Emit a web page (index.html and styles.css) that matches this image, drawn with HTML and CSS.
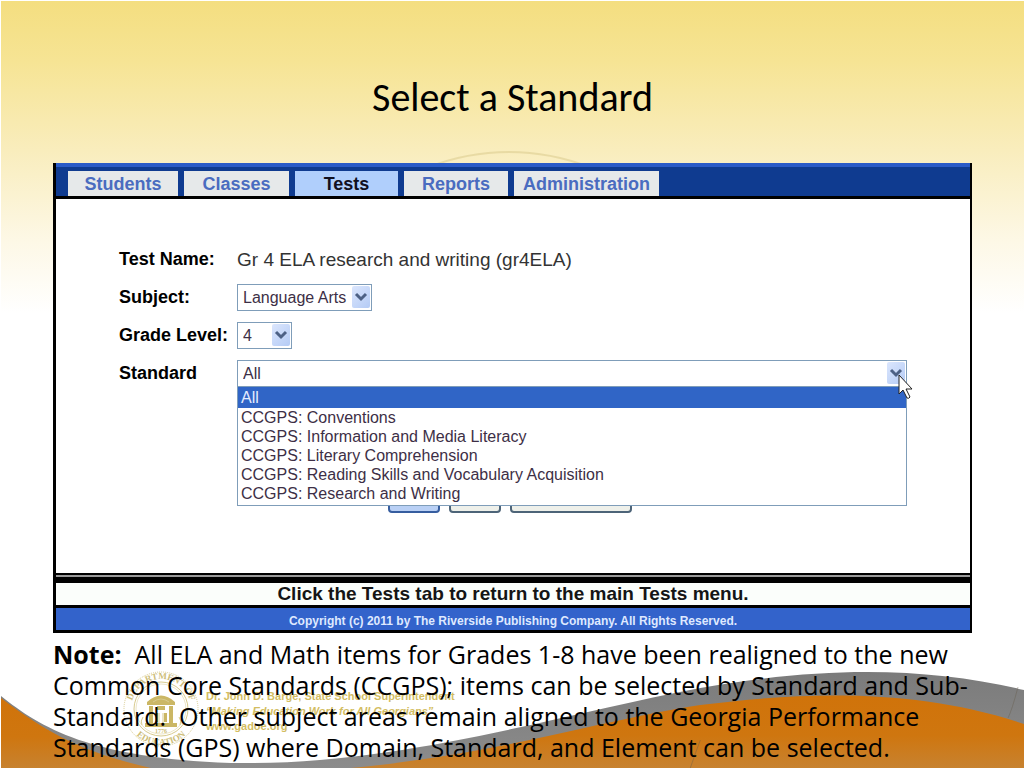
FILE: index.html
```
<!DOCTYPE html>
<html lang="en">
<head>
    <meta charset="UTF-8">
    <meta name="viewport" content="width=device-width, initial-scale=1.0">
    <title>Select a Standard</title>
    <link rel="stylesheet" href="styles.css">
</head>
<body>
    <div class="slide">
        <!-- Slide master decoration -->
        <svg class="watermark" viewBox="0 0 444 444" aria-hidden="true">
            <circle cx="222" cy="222" r="220" />
            <circle cx="222" cy="222" r="205" stroke-dasharray="8 20" />
        </svg>
        <svg class="waves" viewBox="0 0 1024 108" preserveAspectRatio="none" aria-hidden="true">
            <defs>
                <linearGradient id="gray" x1="0" y1="0" x2="0" y2="1">
                    <stop offset="0" stop-color="#7b7b7b" />
                    <stop offset="1" stop-color="#8c8c8c" />
                </linearGradient>
                <linearGradient id="orange" x1="0" y1="0" x2="0" y2="1">
                    <stop offset="0" stop-color="#d0730a" />
                    <stop offset="0.55" stop-color="#cf760f" />
                    <stop offset="1" stop-color="#c78230" />
                </linearGradient>
            </defs>
            <path fill="url(#gray)" d="M0 36C40 68 90 98 230 103C400 106 560 54 700 28C830 5 930 8 1024 30V108H0Z" />
            <path fill="url(#orange)" d="M0 38C45 72 80 92 150 108H0Z" />
            <path fill="url(#orange)" d="M350 108C500 94 600 60 700 45C810 31 920 29 1024 64V108Z" />
            <path class="crease" d="M1018 27Q1012 50 1008 58M700 80Q694 96 690 108" />
        </svg>
        <div class="sponsor">
            <svg class="seal" viewBox="0 0 76 76" aria-hidden="true">
                <defs>
                    <path id="ring-top" d="M8 38a30 30 0 0 1 60 0" />
                    <path id="ring-bottom" d="M2 38a36 36 0 0 0 72 0" />
                </defs>
                <circle cx="38" cy="38" r="37" stroke-dasharray="1 1" />
                <circle cx="38" cy="38" r="27" />
                <circle cx="38" cy="38" r="25" stroke-width="0.5" />
                <text><textPath href="#ring-top" startOffset="50%">DEPARTMENT OF</textPath></text>
                <text><textPath href="#ring-bottom" startOffset="50%">EDUCATION</textPath></text>
                <path class="arch" d="M24 31q14-13 28 0v3H24zM26 35h4v17h-4zM46 35h4v17h-4zM34 35h8v4h-8zM22 52h32v4H22zM32 42h3v9h-3zM41 42h3v9h-3z" />
                <path d="M30 31q8-6 16 0M36 42v10M40 42v10M20 46q-3 4-1 8M56 46q3 4 1 8" />
                <text class="year" x="38" y="62">1776</text>
            </svg>
            <div class="sponsor-text">
                Dr. John D. Barge, State School Superintendent<br>
                <em>“Making Education Work for All Georgians”</em><br>
                www.gadoe.org
            </div>
        </div>

        <h1>Select a Standard</h1>

        <main class="panel">
            <nav class="tabs">
                <a href="#">Students</a>
                <a href="#">Classes</a>
                <a href="#" class="active">Tests</a>
                <a href="#">Reports</a>
                <a href="#">Administration</a>
            </nav>

            <form class="form">
                <div class="form-row">
                    <span class="label">Test Name:</span>
                    <span class="test-name">Gr 4 ELA research and writing (gr4ELA)</span>
                </div>
                <div class="form-row">
                    <label class="label" for="subject">Subject:</label>
                    <div class="select select-subject">
                        <select id="subject">
                            <option>Language Arts</option>
                        </select>
                        <svg class="arrow" viewBox="0 0 18 22" aria-hidden="true"><path d="M4 8l5 5 5-5" /></svg>
                    </div>
                </div>
                <div class="form-row">
                    <label class="label" for="grade">Grade Level:</label>
                    <div class="select select-grade">
                        <select id="grade">
                            <option>4</option>
                        </select>
                        <svg class="arrow" viewBox="0 0 18 22" aria-hidden="true"><path d="M4 8l5 5 5-5" /></svg>
                    </div>
                </div>
                <div class="form-row">
                    <label class="label" for="standard">Standard</label>
                    <div class="select select-standard">
                        <select id="standard">
                            <option>All</option>
                        </select>
                        <svg class="arrow" viewBox="0 0 18 22" aria-hidden="true"><path d="M4 8l5 5 5-5" /></svg>
                        <ul class="options" role="listbox" aria-label="Standard">
                            <li role="option" aria-selected="true" class="selected">All</li>
                            <li role="option">CCGPS: Conventions</li>
                            <li role="option">CCGPS: Information and Media Literacy</li>
                            <li role="option">CCGPS: Literary Comprehension</li>
                            <li role="option">CCGPS: Reading Skills and Vocabulary Acquisition</li>
                            <li role="option">CCGPS: Research and Writing</li>
                        </ul>
                        <svg class="cursor" viewBox="0 0 16 26" aria-hidden="true">
                            <path d="M1 1v19l4-4 4 8q2 1 3-1l-4-8h6z" />
                        </svg>
                    </div>
                </div>
                <div class="buttons">
                    <button type="button" class="primary" aria-label="Next"></button>
                    <button type="button" aria-label="Back"></button>
                    <button type="button" class="wide" aria-label="Cancel"></button>
                </div>
            </form>

            <div class="divider"></div>
            <p class="hint">Click the Tests tab to return to the main Tests menu.</p>
            <footer class="copyright">Copyright (c) 2011 by The Riverside Publishing Company. All Rights Reserved.</footer>
        </main>

        <p class="note">
            <strong>Note:</strong>&nbsp; All ELA and Math items for Grades 1-8 have been realigned to the new<br>
            Common Core Standards (CCGPS); items can be selected by Standard and Sub-<br>
            Standard.&nbsp; Other subject areas remain aligned to the Georgia Performance<br>
            Standards (GPS) where Domain, Standard, and Element can be selected.
        </p>
    </div>
</body>
</html>
```
FILE: styles.css
```
* {
    box-sizing: border-box;
}
body {
    margin: 0;
    font-family: "Liberation Sans", Arial, sans-serif;
    color: #000;
    background: #fff;
}
.slide {
    position: relative;
    z-index: 0;
    min-height: 100vh;
    padding: 0 52px 4px;
    overflow: hidden;
    border-top: 1px solid #fff;
    border-left: 1px solid #fff;
    background: linear-gradient(#f4de80 0, #f6e494 60px, #f9edbd 150px, #fdf8e6 240px, #fff 312px);
}
h1 {
    margin: 0;
    padding: 73px 0 41px;
    font-family: Carlito, Lato, sans-serif;
    font-size: 40px;
    font-weight: 400;
    line-height: 48px;
    text-align: center;
}

/* Background artwork */
.watermark {
    position: absolute;
    z-index: -1;
    top: 149px;
    left: calc(50% - 226px);
    width: 444px;
    height: 444px;
    fill: none;
    stroke: #d9c98a;
    stroke-width: 2;
    opacity: 0.5;
}
.waves {
    position: absolute;
    z-index: -1;
    left: 0;
    bottom: 0;
    width: 100%;
    height: 108px;
}
.crease {
    fill: none;
    stroke: #665a4a;
    opacity: 0.4;
}
.sponsor {
    position: absolute;
    z-index: -1;
    left: 122px;
    bottom: 21px;
    display: flex;
    align-items: center;
    gap: 7px;
}
.seal {
    width: 76px;
    height: 76px;
    fill: none;
    stroke: #d8cb8e;
}
.seal text {
    fill: #cdbd78;
    stroke: none;
    font-family: "Liberation Serif", serif;
    font-size: 9px;
    font-weight: bold;
    text-anchor: middle;
}
.seal .year {
    font-size: 6px;
}
.arch {
    fill: #cbb765;
    stroke: none;
}
.sponsor-text {
    padding-top: 4px;
    color: #d3bd62;
    font-size: 11px;
    font-weight: bold;
    line-height: 15px;
}

/* Application window */
.panel {
    border: solid #000;
    border-width: 0 2px 3px 3px;
    background: #fff;
}
.tabs {
    display: grid;
    grid-template-columns: 110px 105px 103px 104px 145px;
    gap: 6px;
    padding: 4px 12px 0;
    border-top: 4px solid #2a5bc8;
    border-bottom: 3px solid #000;
    background: #0f3b90;
}
.tabs a {
    height: 25px;
    background: #e6e9ea;
    color: #4a6cc0;
    font-size: 18px;
    font-weight: bold;
    line-height: 26px;
    text-align: center;
    text-decoration: none;
}
.tabs .active {
    background: #b0cffc;
    color: #101020;
}
.form {
    display: flex;
    flex-direction: column;
    gap: 11px;
    height: 374px;
    padding: 47px 63px 0;
}
.form-row {
    display: grid;
    grid-template-columns: 118px 1fr;
    align-items: center;
    height: 27px;
}
.label {
    font-size: 18px;
    font-weight: bold;
    white-space: nowrap;
}
.test-name {
    color: #333;
    font-size: 19px;
}
.select {
    position: relative;
    height: 27px;
}
.select-subject {
    width: 135px;
}
.select-grade {
    width: 55px;
}
.select select {
    width: 100%;
    height: 27px;
    padding: 0 5px;
    appearance: none;
    border: 1px solid #7f9db9;
    border-radius: 0;
    background: #fff;
    color: #3d2f46;
    font-family: inherit;
    font-size: 16px;
}
.arrow {
    position: absolute;
    top: 2px;
    right: 2px;
    width: 18px;
    height: 22px;
    border-radius: 2px;
    background: linear-gradient(135deg, #dbe6fd, #b4cbf5);
    fill: none;
    stroke: #4d6185;
    stroke-width: 3;
    pointer-events: none;
}
.options {
    position: absolute;
    z-index: 1;
    top: 26px;
    left: 0;
    right: 0;
    margin: 0;
    padding: 0 0 2px;
    border: 1px solid #7f9db9;
    background: #fff;
    color: #3d2f46;
    font-size: 16px;
    line-height: 19px;
    list-style: none;
}
.options li {
    padding-left: 3px;
}
.options .selected {
    background: #3065c6;
    color: #e4ecff;
    line-height: 21px;
}
.cursor {
    position: absolute;
    z-index: 2;
    top: 14px;
    right: -7px;
    width: 16px;
    height: 26px;
    fill: #fff;
    stroke: #222;
}
.buttons {
    display: flex;
    gap: 9px;
    margin-top: 89px;
    padding-left: 269px;
}
.buttons button {
    width: 52px;
    height: 26px;
    padding: 0;
    border: 2px solid #4d6478;
    border-radius: 4px;
    background: #eef0ea;
}
.buttons .primary {
    border-color: #365d9f;
    background: #b9d0f5;
}
.buttons .wide {
    width: 122px;
}
.divider {
    height: 10px;
    border: solid #000;
    border-width: 2px 0 6px;
    background: #999;
}
.hint {
    margin: 0;
    border-bottom: 3px solid #000;
    background: #fbfefb;
    color: #151515;
    font-size: 19px;
    font-weight: bold;
    line-height: 22px;
    text-align: center;
}
.copyright {
    padding-top: 5px;
    background: #3363cb;
    color: #dfe9ff;
    font-size: 12px;
    font-weight: bold;
    line-height: 17px;
    text-align: center;
}
.note {
    margin: 0;
    padding-top: 6px;
    font-family: "Trebuchet MS", "Open Sans", sans-serif;
    font-size: 25px;
    line-height: 31px;
    white-space: nowrap;
}
```
